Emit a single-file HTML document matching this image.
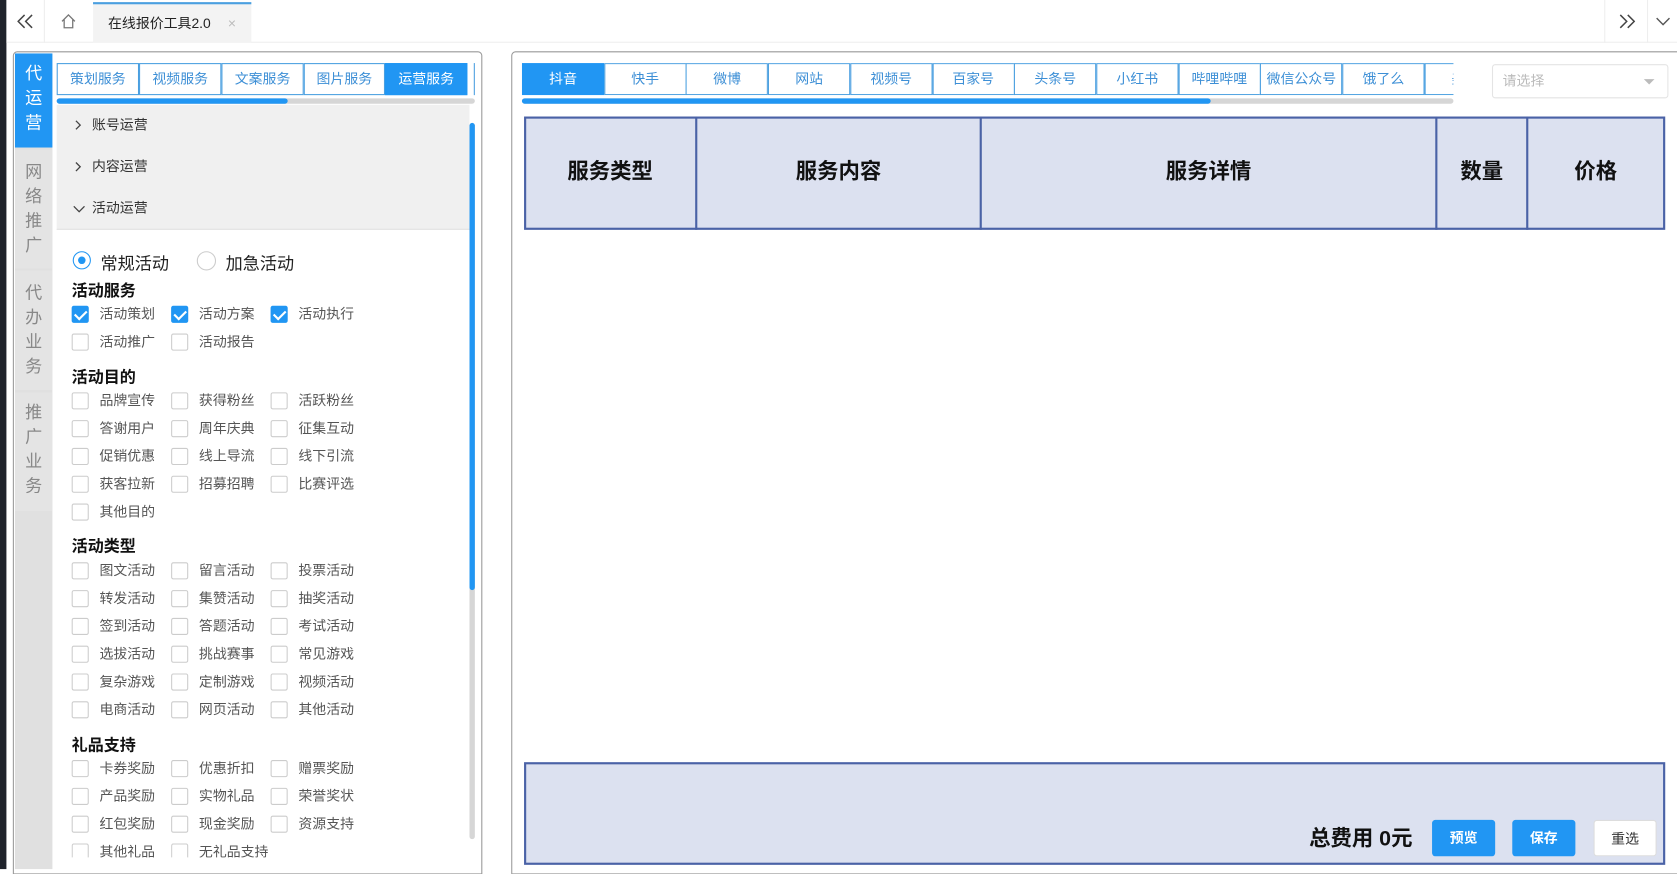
<!DOCTYPE html>
<html><head><meta charset="utf-8"><style>
*{box-sizing:border-box;margin:0;padding:0}
html,body{width:1677px;height:869px;overflow:hidden;background:#fff;font-family:"Liberation Sans","Noto Sans CJK SC",sans-serif}
#w{position:absolute;left:0;top:0;width:1568px;height:813px;transform:scale(1.0695,1.069);transform-origin:0 0;background:#fff}
.a{position:absolute}
.tab{position:absolute;top:59px;height:30px;border:1.5px solid #4a9fe0;color:#3d8fd6;font-size:13px;text-align:center;line-height:27px;background:#fff}
.tab.on{background:#2196f3;color:#fff;border-color:#2196f3}
.cb{position:absolute;width:16px;height:16px;border:1px solid #ccc;background:#fff;border-radius:2px}
.cb.on{background:#2196f3;border-color:#2196f3}
.cb.on:after{content:"";position:absolute;left:4px;top:1px;width:5px;height:9px;border:solid #fff;border-width:0 2px 2px 0;transform:rotate(45deg)}
.lb{position:absolute;font-size:13px;color:#555;line-height:16px}
.st{position:absolute;left:67px;font-size:15px;font-weight:bold;color:#111}
.side{position:absolute;left:14px;width:35px;font-size:16px;color:#888;text-align:center;line-height:23px;background:#e4e4e4}
.th{position:absolute;top:109px;height:106px;font-size:20px;font-weight:bold;color:#111;text-align:center;line-height:104px}
.btn{position:absolute;top:767px;width:59px;height:34px;border-radius:3px;font-size:13px;text-align:center;line-height:34px;font-weight:bold}
.ci{position:absolute;font-size:13px;color:#333;line-height:16px}
.ci svg{position:absolute;left:-18px;top:3px}
</style></head><body><div id="w">
<div class="a" style="left:0;top:0;width:6px;height:813px;background:#1f232b"></div>
<div class="a" style="left:6px;top:0;width:1562px;height:40px;border-bottom:1px solid #eee;background:#fff"></div>
<div class="a" style="left:6px;top:0;width:36px;height:40px;border-right:1px solid #eee;text-align:center">
<svg width="16" height="14" viewBox="0 0 16 14" style="margin-top:13px"><path d="M7 1L1 7L7 13M14 1L8 7L14 13" fill="none" stroke="#444" stroke-width="1.4"/></svg></div>
<div class="a" style="left:42px;top:0;width:44px;height:40px;text-align:center">
<svg width="16" height="16" viewBox="0 0 16 16" style="margin-top:12px"><path d="M2 8L8 2L14 8M4 6.5V14H12V6.5" fill="none" stroke="#777" stroke-width="1.2"/></svg></div>
<div class="a" style="left:87px;top:2px;width:148px;height:38px;background:#f3f3f3;border-top:2px solid #4a9fe0;font-size:13px;color:#222;line-height:36px;padding-left:14px">在线报价工具2.0<span style="color:#bbb;margin-left:16px">×</span></div>
<div class="a" style="left:1500px;top:0;width:40px;height:40px;border-left:1px solid #eee;text-align:center">
<svg width="16" height="14" viewBox="0 0 16 14" style="margin-top:13px"><path d="M2 1L8 7L2 13M9 1L15 7L9 13" fill="none" stroke="#444" stroke-width="1.4"/></svg></div>
<div class="a" style="left:1540px;top:0;width:28px;height:40px;border-left:1px solid #eee;text-align:center">
<svg width="14" height="10" viewBox="0 0 14 10" style="margin-top:15px"><path d="M1 2L7 8L13 2" fill="none" stroke="#555" stroke-width="1.3"/></svg></div>

<!-- left panel -->
<div class="a" style="left:12px;top:48px;width:439px;height:770px;border:1px solid #999;border-radius:4px 4px 0 0;background:#fff"></div>
<div class="a" style="left:14px;top:50px;width:35px;height:763px;background:#e0e0e0"></div>
<div class="side" style="top:50px;height:88px;background:#2196f3;color:#fff;padding-top:8px">代<br>运<br>营</div>
<div class="side" style="top:140px;height:111px;padding-top:10px">网<br>络<br>推<br>广</div>
<div class="side" style="top:253px;height:112px;padding-top:10px">代<br>办<br>业<br>务</div>
<div class="side" style="top:367px;height:111px;padding-top:8px">推<br>广<br>业<br>务</div>
<div class="a" style="left:53px;top:98px;width:386px;height:117px;background:#f0f0f0;border-bottom:1px solid #e2e2e2"></div>
<div class="a" style="left:53px;top:59px;width:391px;height:30px;border-right:1.5px solid #4a9fe0"></div>
<div class="tab" style="left:53px;width:77px">策划服务</div>
<div class="tab" style="left:130px;width:77px">视频服务</div>
<div class="tab" style="left:207px;width:77px">文案服务</div>
<div class="tab" style="left:284px;width:76px">图片服务</div>
<div class="tab on" style="left:360px;width:77px">运营服务</div>
<div class="a" style="left:53px;top:92px;width:391px;height:5px;background:#d6d6d6;border-radius:3px"></div>
<div class="a" style="left:53px;top:92px;width:216px;height:5px;background:#2196f3;border-radius:3px"></div>
<div class="a" style="left:439px;top:115px;width:5px;height:670px;background:#d6d6d6;border-radius:3px"></div>
<div class="a" style="left:439px;top:115px;width:5px;height:437px;background:#2196f3;border-radius:3px"></div>
<div class="ci" style="left:86px;top:109px"><svg width="10" height="10" viewBox="0 0 10 10"><path d="M3 1L7 5L3 9" fill="none" stroke="#444" stroke-width="1.2"/></svg>账号运营</div>
<div class="ci" style="left:86px;top:148px"><svg width="10" height="10" viewBox="0 0 10 10"><path d="M3 1L7 5L3 9" fill="none" stroke="#444" stroke-width="1.2"/></svg>内容运营</div>
<div class="ci" style="left:86px;top:187px"><svg width="12" height="10" viewBox="0 0 12 10"><path d="M1 3L6 8L11 3" fill="none" stroke="#444" stroke-width="1.2"/></svg>活动运营</div>
<div class="a" style="left:68px;top:235px;width:17px;height:17px;border:1px solid #2196f3;border-radius:50%"><div style="position:absolute;left:4px;top:4px;width:7px;height:7px;border-radius:50%;background:#2196f3"></div></div>
<div class="a" style="left:94px;top:233px;font-size:16px;color:#222">常规活动</div>
<div class="a" style="left:184px;top:235px;width:18px;height:18px;border:1px solid #ccc;border-radius:50%"></div>
<div class="a" style="left:211px;top:233px;font-size:16px;color:#222">加急活动</div>

<div class="st" style="top:261px">活动服务</div>
<div class="st" style="top:342px">活动目的</div>
<div class="st" style="top:500px">活动类型</div>
<div class="st" style="top:686px">礼品支持</div>

<div id="cbs"></div>

<!-- right panel -->
<div class="a" style="left:478px;top:48px;width:1095px;height:770px;border:1px solid #999;border-radius:4px 4px 0 0"></div>
<div class="a" style="left:488px;top:59px;width:871px;height:30px;overflow:hidden">
<div style="position:relative;width:1000px;height:30px" id="pt"></div></div>
<div class="a" style="left:488px;top:92px;width:871px;height:5px;background:#d6d6d6;border-radius:3px"></div>
<div class="a" style="left:488px;top:92px;width:644px;height:5px;background:#2196f3;border-radius:3px"></div>
<div class="a" style="left:1395px;top:60px;width:165px;height:32px;border:1px solid #e4e4e4;border-radius:3px;font-size:13px;color:#bbb;line-height:30px;padding-left:9px">请选择<span style="position:absolute;right:12px;top:13px;border:5px solid transparent;border-top-color:#bbb"></span></div>

<div class="a" style="left:490px;top:109px;width:1067px;height:106px;background:#dce1f0;border:2px solid #4a62a6"></div>
<div class="a" style="left:650px;top:109px;width:2px;height:106px;background:#4a62a6"></div>
<div class="a" style="left:916px;top:109px;width:2px;height:106px;background:#4a62a6"></div>
<div class="a" style="left:1342px;top:109px;width:2px;height:106px;background:#4a62a6"></div>
<div class="a" style="left:1427px;top:109px;width:2px;height:106px;background:#4a62a6"></div>
<div class="th" style="left:490px;width:161px">服务类型</div>
<div class="th" style="left:651px;width:266px">服务内容</div>
<div class="th" style="left:917px;width:426px">服务详情</div>
<div class="th" style="left:1343px;width:85px">数量</div>
<div class="th" style="left:1428px;width:128px">价格</div>

<div class="a" style="left:490px;top:713px;width:1067px;height:96px;background:#dce1f0;border:2px solid #4a62a6"></div>
<div class="a" style="left:1224px;top:768px;font-size:20px;font-weight:bold;color:#111">总费用 0元</div>
<div class="btn" style="left:1339px;background:#2196f3;color:#fff">预览</div>
<div class="btn" style="left:1414px;background:#2196f3;color:#fff">保存</div>
<div class="btn" style="left:1490px;background:#fff;color:#333;border:1px solid #ddd;font-weight:normal">重选</div>
</div>
<script>
var rows=[[286,[["活动策划",1],["活动方案",1],["活动执行",1]]],[312,[["活动推广"],["活动报告"]]],
[367,[["品牌宣传"],["获得粉丝"],["活跃粉丝"]]],[393,[["答谢用户"],["周年庆典"],["征集互动"]]],[419,[["促销优惠"],["线上导流"],["线下引流"]]],[445,[["获客拉新"],["招募招聘"],["比赛评选"]]],[471,[["其他目的"]]],
[526,[["图文活动"],["留言活动"],["投票活动"]]],[552,[["转发活动"],["集赞活动"],["抽奖活动"]]],[578,[["签到活动"],["答题活动"],["考试活动"]]],[604,[["选拔活动"],["挑战赛事"],["常见游戏"]]],[630,[["复杂游戏"],["定制游戏"],["视频活动"]]],[656,[["电商活动"],["网页活动"],["其他活动"]]],
[711,[["卡券奖励"],["优惠折扣"],["赠票奖励"]]],[737,[["产品奖励"],["实物礼品"],["荣誉奖状"]]],[763,[["红包奖励"],["现金奖励"],["资源支持"]]],[789,[["其他礼品"],["无礼品支持"]]]];
var h="",xs=[67,160,253];
rows.forEach(function(r){r[1].forEach(function(c,i){var y=r[0];
if(y>780){h+='<div class="a" style="left:'+xs[i]+'px;top:'+y+'px;width:120px;height:'+(802-y)+'px;overflow:hidden"><div class="cb" style="left:0;top:0"></div><div class="lb" style="left:26px;top:0;white-space:nowrap">'+c[0]+'</div></div>';return;}
h+='<div class="cb'+(c[1]?' on':'')+'" style="left:'+xs[i]+'px;top:'+y+'px"></div><div class="lb" style="left:'+(xs[i]+26)+'px;top:'+y+'px">'+c[0]+'</div>';});});
document.getElementById("cbs").innerHTML=h;
var t=["抖音","快手","微博","网站","视频号","百家号","头条号","小红书","哔哩哔哩","微信公众号","饿了么","美团"],p="";
t.forEach(function(s,i){p+='<div class="tab'+(i==0?' on':'')+'" style="top:0;left:'+(i*76.7)+'px;width:77px">'+s+'</div>';});
document.getElementById("pt").innerHTML=p;
</script>
</body></html>
